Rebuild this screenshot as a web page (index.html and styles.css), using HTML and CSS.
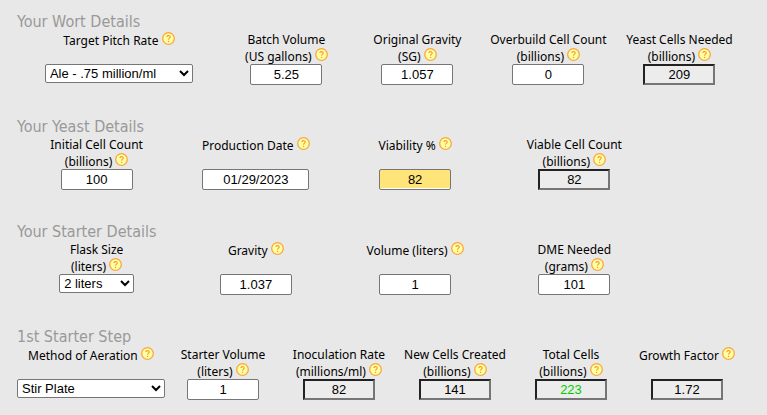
FILE: index.html
```html
<!DOCTYPE html>
<html lang="en">
<head>
    <meta charset="UTF-8">
    <title>Yeast Starter Calculator</title>
    <link rel="stylesheet" href="styles.css">
</head>
<body>
    <svg class="sprite" aria-hidden="true">
        <symbol id="help" viewBox="0 0 13 13">
            <circle cx="6.5" cy="6.5" r="5.8" fill="#ffffa3" stroke="#fba63c" stroke-width="1.3"/>
            <path d="M4.9 5.1C4.9 3.1 8.2 3.1 8.2 5C8.2 6.2 6.6 6.2 6.6 7.7" fill="none" stroke="#f9952d" stroke-width="1.1"/>
            <circle cx="6.6" cy="9.4" r=".7" fill="#f9952d"/>
        </symbol>
    </svg>

    <form class="calculator">
        <section class="section">
            <h2 class="section-title">Your Wort Details</h2>
            <div class="fields fields-wort">
                <div class="field">
                    <label for="pitchRate">Target Pitch Rate <svg class="help"><use href="#help"/></svg></label>
                    <select id="pitchRate" class="select-wide"><option>Ale - .75 million/ml</option></select>
                </div>
                <div class="field">
                    <label for="batchVolume">Batch Volume<br>(US gallons) <svg class="help"><use href="#help"/></svg></label>
                    <input type="text" id="batchVolume" value="5.25">
                </div>
                <div class="field">
                    <label for="gravity">Original Gravity<br>(SG) <svg class="help"><use href="#help"/></svg></label>
                    <input type="text" id="gravity" value="1.057">
                </div>
                <div class="field">
                    <label for="overbuild">Overbuild Cell Count<br>(billions) <svg class="help"><use href="#help"/></svg></label>
                    <input type="text" id="overbuild" value="0">
                </div>
                <div class="field">
                    <label for="cellsNeeded">Yeast Cells Needed<br>(billions) <svg class="help"><use href="#help"/></svg></label>
                    <input type="text" id="cellsNeeded" class="result" value="209" readonly>
                </div>
            </div>
        </section>

        <section class="section">
            <h2 class="section-title">Your Yeast Details</h2>
            <div class="fields fields-yeast">
                <div class="field">
                    <label for="initialCount">Initial Cell Count<br>(billions) <svg class="help"><use href="#help"/></svg></label>
                    <input type="text" id="initialCount" value="100">
                </div>
                <div class="field">
                    <label for="productionDate">Production Date <svg class="help"><use href="#help"/></svg></label>
                    <input type="text" id="productionDate" class="date" value="01/29/2023">
                </div>
                <div class="field">
                    <label for="viability">Viability % <svg class="help"><use href="#help"/></svg></label>
                    <input type="text" id="viability" class="warning" value="82">
                </div>
                <div class="field">
                    <label for="viableCount">Viable Cell Count<br>(billions) <svg class="help"><use href="#help"/></svg></label>
                    <input type="text" id="viableCount" class="result" value="82" readonly>
                </div>
            </div>
        </section>

        <section class="section">
            <h2 class="section-title">Your Starter Details</h2>
            <div class="fields fields-yeast">
                <div class="field">
                    <label for="flaskSize">Flask Size<br>(liters) <svg class="help"><use href="#help"/></svg></label>
                    <select id="flaskSize" class="select-small"><option>2 liters</option></select>
                </div>
                <div class="field">
                    <label for="starterGravity">Gravity <svg class="help"><use href="#help"/></svg></label>
                    <input type="text" id="starterGravity" value="1.037">
                </div>
                <div class="field">
                    <label for="volume">Volume (liters) <svg class="help"><use href="#help"/></svg></label>
                    <input type="text" id="volume" value="1">
                </div>
                <div class="field">
                    <label for="dme">DME Needed<br>(grams) <svg class="help"><use href="#help"/></svg></label>
                    <input type="text" id="dme" value="101">
                </div>
            </div>
        </section>

        <section class="section">
            <h2 class="section-title">1st Starter Step</h2>
            <div class="fields fields-step">
                <div class="field">
                    <label for="aeration">Method of Aeration <svg class="help"><use href="#help"/></svg></label>
                    <select id="aeration" class="select-wide"><option>Stir Plate</option></select>
                </div>
                <div class="field">
                    <label for="stepVolume">Starter Volume<br>(liters) <svg class="help"><use href="#help"/></svg></label>
                    <input type="text" id="stepVolume" value="1">
                </div>
                <div class="field">
                    <label for="inoculation">Inoculation Rate<br>(millions/ml) <svg class="help"><use href="#help"/></svg></label>
                    <input type="text" id="inoculation" class="result" value="82" readonly>
                </div>
                <div class="field">
                    <label for="newCells">New Cells Created<br>(billions) <svg class="help"><use href="#help"/></svg></label>
                    <input type="text" id="newCells" class="result" value="141" readonly>
                </div>
                <div class="field">
                    <label for="totalCells">Total Cells<br>(billions) <svg class="help"><use href="#help"/></svg></label>
                    <input type="text" id="totalCells" class="result good" value="223" readonly>
                </div>
                <div class="field">
                    <label for="growth">Growth Factor <svg class="help"><use href="#help"/></svg></label>
                    <input type="text" id="growth" class="result" value="1.72" readonly>
                </div>
            </div>
        </section>
    </form>
</body>
</html>
```
FILE: styles.css
```css
body {
    margin: 0;
    background: #e8e8e8;
    color: #000;
    font-family: Tahoma, "Noto Sans", sans-serif;
    font-size: 12px;
    line-height: 16px;
}

.sprite {
    display: none;
}

.calculator {
    padding: 12px 22px 0 17px;
}

.section {
    margin-bottom: 32px;
}

.section:last-child {
    margin-bottom: 0;
}

.section-title {
    margin: 0;
    font-family: Tahoma, "DejaVu Sans Condensed", sans-serif;
    font-size: 16px;
    font-weight: normal;
    line-height: 20px;
    color: #999;
}

.fields {
    display: grid;
}

.fields-wort {
    grid-template-columns: 14fr repeat(4, 9fr);
}

.fields-yeast {
    grid-template-columns: repeat(4, 7fr) 4fr;
}

.fields-step {
    grid-template-columns: 5fr repeat(5, 4fr);
}

.field {
    display: flex;
    flex-direction: column;
    align-items: center;
    height: 53px;
}

.field label {
    height: 32px;
    text-align: center;
    white-space: nowrap;
}

.help {
    width: 13px;
    height: 13px;
}

input,
select {
    box-sizing: border-box;
    margin: 0;
    border: 1px solid #767676;
    border-radius: 2px;
    background-color: #fff;
    color: #000;
    font-family: Arial, "Liberation Sans", sans-serif;
    font-size: 13px;
}

input {
    width: 72px;
    height: 21px;
    padding: 1px 2px;
    text-align: center;
}

select {
    height: 19px;
}

.select-wide {
    width: 148px;
}

.select-small {
    width: 75px;
}

.date {
    width: 107px;
}

.warning {
    background-color: #ffe47a;
    box-shadow: inset 0 -1px #fff;
}

.result {
    border: 2px solid;
    border-color: #222 #767676 #767676 #222;
    border-radius: 0;
    padding: 0 1px;
    background-color: #ececec;
}

.good {
    color: #0c0;
}
```
